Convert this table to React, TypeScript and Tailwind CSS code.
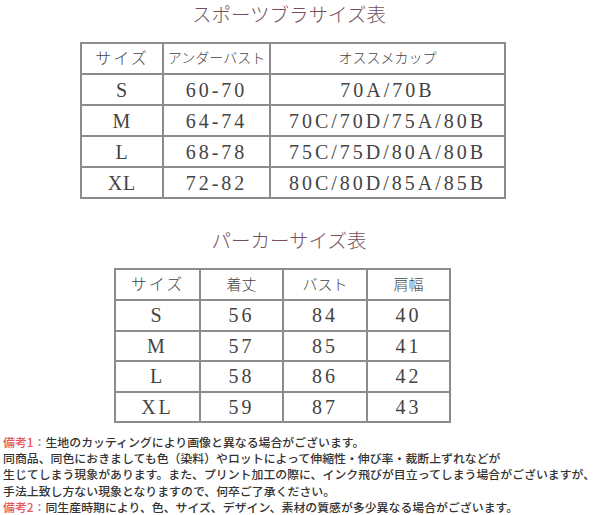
import React from 'react';

const serif = { fontFamily: '"Liberation Serif", "Noto Sans CJK JP", serif' };

const braRows = [
  ['S', '60-70', '70A/70B'],
  ['M', '64-74', '70C/70D/75A/80B'],
  ['L', '68-78', '75C/75D/80A/80B'],
  ['XL', '72-82', '80C/80D/85A/85B'],
];

const hoodieRows = [
  ['S', '56', '84', '40'],
  ['M', '57', '85', '41'],
  ['L', '58', '86', '42'],
  ['XL', '59', '87', '43'],
];

const cell = 'border-2 border-[#8c8c8c] text-center align-middle p-0 leading-[20px]';

export default function App() {
  return (
    <div className="w-[600px] h-[515px] overflow-hidden bg-white text-[#444]">
      {/* Sports bra size table */}
      <div className="w-[578px] pt-[1px] text-center font-['Noto_Sans_CJK_JP'] text-[19.5px] leading-[26px] font-light text-[#74505e]">
        スポーツブラサイズ表
      </div>
      <table className="ml-[80px] mt-[15px] border-collapse table-fixed w-[424px]" style={serif}>
        <colgroup>
          <col className="w-[82px]" />
          <col className="w-[107px]" />
          <col className="w-[235px]" />
        </colgroup>
        <thead>
          <tr className="h-[31px]">
            <th className={`${cell} text-[16px] font-light tracking-[2px]`}>サイズ</th>
            <th className={`${cell} text-[14px] font-light`}>アンダーバスト</th>
            <th className={`${cell} text-[14px] font-light`}>オススメカップ</th>
          </tr>
        </thead>
        <tbody>
          {braRows.map((r) => (
            <tr key={r[0]} className="h-[31px]">
              <td className={`${cell} text-[20px] tracking-[1px]`}>{r[0]}</td>
              <td className={`${cell} text-[20px] tracking-[3px]`}>{r[1]}</td>
              <td className={`${cell} text-[20px] tracking-[3px]`}>{r[2]}</td>
            </tr>
          ))}
        </tbody>
      </table>

      {/* Hoodie size table */}
      <div className="w-[578px] mt-[28px] text-center font-['Noto_Sans_CJK_JP'] text-[19.5px] leading-[26px] font-light text-[#74505e]">
        パーカーサイズ表
      </div>
      <table className="ml-[114px] mt-[15px] border-collapse table-fixed w-[335px]" style={serif}>
        <colgroup>
          <col className="w-[85px]" />
          <col className="w-[83px]" />
          <col className="w-[84px]" />
          <col className="w-[83px]" />
        </colgroup>
        <thead>
          <tr className="h-[31px]">
            <th className={`${cell} text-[16px] font-light tracking-[2px]`}>サイズ</th>
            <th className={`${cell} text-[15px] font-light`}>着丈</th>
            <th className={`${cell} text-[15px] font-light`}>バスト</th>
            <th className={`${cell} text-[15px] font-light`}>肩幅</th>
          </tr>
        </thead>
        <tbody>
          {hoodieRows.map((r) => (
            <tr key={r[0]} className="h-[30.5px]">
              {r.map((v, i) => (
                <td key={i} className={`${cell} text-[20px] tracking-[3px]`}>{v}</td>
              ))}
            </tr>
          ))}
        </tbody>
      </table>

      {/* Notes */}
      <div className="mt-[11px] pl-[3px] font-['Noto_Sans_CJK_JP'] text-[11.9px] leading-[16.2px] font-medium text-[#333] whitespace-nowrap">
        <p>
          <span className="text-[#e5585c]">備考1</span>
          <span className="text-[#999]">：</span>生地のカッティングにより画像と異なる場合がございます。
        </p>
        <p>同商品、同色におきましても色（染料）やロットによって伸縮性・伸び率・裁断上ずれなどが</p>
        <p>生じてしまう現象があります。また、プリント加工の際に、インク飛びが目立ってしまう場合がございますが、</p>
        <p>手法上致し方ない現象となりますので、何卒ご了承ください。</p>
        <p>
          <span className="text-[#e5585c]">備考2</span>
          <span className="text-[#999]">：</span>同生産時期により、色、サイズ、デザイン、素材の質感が多少異なる場合がございます。
        </p>
      </div>
    </div>
  );
}
